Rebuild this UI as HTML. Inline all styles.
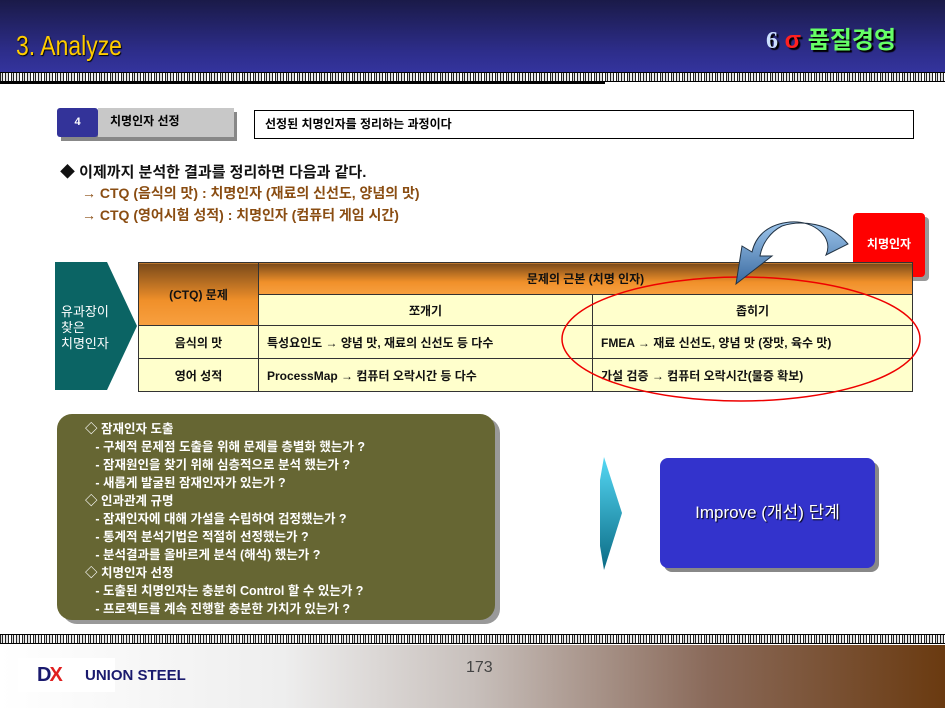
<!DOCTYPE html>
<html><head><meta charset="utf-8"><style>
*{margin:0;padding:0;box-sizing:border-box}
body{width:945px;height:708px;position:relative;overflow:hidden;background:#fff;font-family:"Liberation Sans","Noto Sans CJK KR",sans-serif}
.a{position:absolute}
.border{height:10px;background:repeating-linear-gradient(90deg,#222 0 1px,#ddd 1px 2px,#222 2px 3px,#eee 3px 5px,#222 5px 6px,#ddd 6px 8px,#222 8px 9px,#fff 9px 11px);border-top:1px solid #000;border-bottom:1px solid #000}
td{border:1px solid #333;font-size:12px;text-align:center;color:#111;font-weight:bold}
</style></head><body>
<div class="a" style="left:0;top:0;width:945px;height:73px;background:linear-gradient(#1a1a48,#2d2d8a 70%,#34349e)"></div>
<div class="a" style="left:16px;top:30px;font-size:28px;color:#ffcc00;text-shadow:1px 1px 1px #000;transform:scaleX(0.82);transform-origin:left">3. Analyze</div>
<div class="a" style="left:766px;top:20px;font-size:24px;font-weight:bold;text-shadow:2px 2px 1px #000"><span style="color:#cce0ff;font-family:'Liberation Serif',serif">6</span> <span style="color:#ff2020">σ</span> <span style="color:#66ff66">품질경영</span></div>
<div class="a border" style="left:0;top:72px;width:945px"></div>
<div class="a" style="left:0;top:82px;width:605px;height:2px;background:#000"></div>

<div class="a" style="left:61px;top:112px;width:176px;height:29px;background:#888"></div>
<div class="a" style="left:57px;top:108px;width:41px;height:29px;background:#333399;color:#fff;font-size:11px;font-weight:bold;text-align:center;line-height:29px;border-radius:3px">4</div>
<div class="a" style="left:98px;top:108px;width:136px;height:29px;background:#c8c8c8;font-size:12px;font-weight:bold;line-height:27px;padding-left:12px">치명인자 선정</div>
<div class="a" style="left:254px;top:110px;width:660px;height:29px;border:1px solid #000;font-size:12px;font-weight:bold;line-height:27px;padding-left:10px">선정된 치명인자를 정리하는 과정이다</div>

<div class="a" style="left:60px;top:161px;font-size:15px;font-weight:bold;color:#111">◆ 이제까지 분석한 결과를 정리하면 다음과 같다.</div>
<div class="a" style="left:82px;top:182px;font-size:14px;font-weight:bold;color:#8a4d12;line-height:22px">→ CTQ (음식의 맛) : 치명인자 (재료의 신선도, 양념의 맛)<br>→ CTQ (영어시험 성적) : 치명인자 (컴퓨터 게임 시간)</div>

<div class="a" style="left:857px;top:217px;width:72px;height:64px;background:#999;border-radius:4px"></div>
<div class="a" style="left:853px;top:213px;width:72px;height:64px;background:#ff0000;border-radius:4px;color:#fff;font-size:12px;font-weight:bold;text-align:center;line-height:62px">치명인자</div>

<svg class="a" style="left:55px;top:262px" width="82" height="130"><polygon points="0,0 52,0 82,64 52,128 0,128" fill="#0b6464"/><text x="6" y="54" fill="#fff" font-size="13" font-family="Noto Sans CJK KR">유과장이</text><text x="6" y="70" fill="#fff" font-size="13" font-family="Noto Sans CJK KR">찾은</text><text x="6" y="86" fill="#fff" font-size="13" font-family="Noto Sans CJK KR">치명인자</text></svg>

<table class="a" style="left:138px;top:262px;width:775px;height:129px;border-collapse:collapse;background:#ffffcc">
<tr style="height:32px"><td rowspan="2" style="width:120px;background:linear-gradient(#7a4a1a,#f0902a 60%,#f8a040)">(CTQ) 문제</td><td colspan="2" style="background:linear-gradient(#7a4a1a,#f0902a 60%,#f8a040)">문제의 근본 (치명 인자)</td></tr>
<tr style="height:31px"><td style="width:334px">쪼개기</td><td>좁히기</td></tr>
<tr style="height:33px"><td>음식의 맛</td><td style="text-align:left;padding-left:8px">특성요인도 → 양념 맛, 재료의 신선도 등 다수</td><td style="text-align:left;padding-left:8px">FMEA → 재료 신선도, 양념 맛 (장맛, 육수 맛)</td></tr>
<tr style="height:33px"><td>영어 성적</td><td style="text-align:left;padding-left:8px">ProcessMap → 컴퓨터 오락시간 등 다수</td><td style="text-align:left;padding-left:8px">가설 검증 → 컴퓨터 오락시간(물증 확보)</td></tr>
</table>

<svg class="a" style="left:0;top:0" width="945" height="708">
<ellipse cx="741" cy="339" rx="179" ry="62" fill="none" stroke="#e00" stroke-width="1.5"/>
<defs><linearGradient id="g" x1="0" y1="0" x2="0" y2="1"><stop offset="0" stop-color="#9ec6ec"/><stop offset="1" stop-color="#3a6aa0"/></linearGradient><linearGradient id="h" x1="0" y1="0" x2="0" y2="1"><stop offset="0" stop-color="#55d8f4"/><stop offset="1" stop-color="#0a6a84"/></linearGradient></defs>
<path d="M848,244 C830,222 800,220 782,226 C770,232 762,244 760,256 L772,256 L736,284 L742,246 L752,252 C756,234 770,224 790,222 C815,220 834,238 826,255 Z" fill="url(#g)" stroke="#234" stroke-width="1"/>
<polygon points="600,480 604,457 622,513 604,570 600,546" fill="url(#h)"/>
</svg>

<div class="a" style="left:62px;top:418px;width:438px;height:206px;background:#999;border-radius:15px"></div>
<div class="a" style="left:57px;top:414px;width:438px;height:206px;background:#666633;border-radius:15px;color:#fff;font-size:12.5px;font-weight:bold;line-height:18px;padding:6px 0 0 28px;white-space:pre">◇ 잠재인자 도출
   - 구체적 문제점 도출을 위해 문제를 층별화 했는가 ?
   - 잠재원인을 찾기 위해 심층적으로 분석 했는가 ?
   - 새롭게 발굴된 잠재인자가 있는가 ?
◇ 인과관계 규명
   - 잠재인자에 대해 가설을 수립하여 검정했는가 ?
   - 통계적 분석기법은 적절히 선정했는가 ?
   - 분석결과를 올바르게 분석 (해석) 했는가 ?
◇ 치명인자 선정
   - 도출된 치명인자는 충분히 Control 할 수 있는가 ?
   - 프로젝트를 계속 진행할 충분한 가치가 있는가 ?</div>

<div class="a" style="left:664px;top:462px;width:215px;height:110px;background:#888;border-radius:8px"></div>
<div class="a" style="left:660px;top:458px;width:215px;height:110px;background:#3333cc;border-radius:8px;color:#fff;font-size:17px;text-align:center;line-height:110px;text-shadow:1px 1px 1px #000">Improve (개선) 단계</div>

<div class="a border" style="left:0;top:634px;width:945px"></div>
<div class="a" style="left:0;top:645px;width:945px;height:63px;background:linear-gradient(90deg,#fff 0%,#eee 30%,#c8c0bc 50%,#8a6a5a 75%,#6a3a10 100%)"></div>
<div class="a" style="left:18px;top:658px;width:97px;height:34px;background:#fff"></div>
<div class="a" style="left:37px;top:664px;font-size:20px;font-weight:900;color:#1a1a6e;letter-spacing:-2px">D<span style="color:#e02020">X</span></div>
<div class="a" style="left:85px;top:667px;font-size:15px;font-weight:bold;color:#1a1a6e">UNION STEEL</div>
<div class="a" style="left:466px;top:659px;font-size:16px;color:#444">173</div>
</body></html>
